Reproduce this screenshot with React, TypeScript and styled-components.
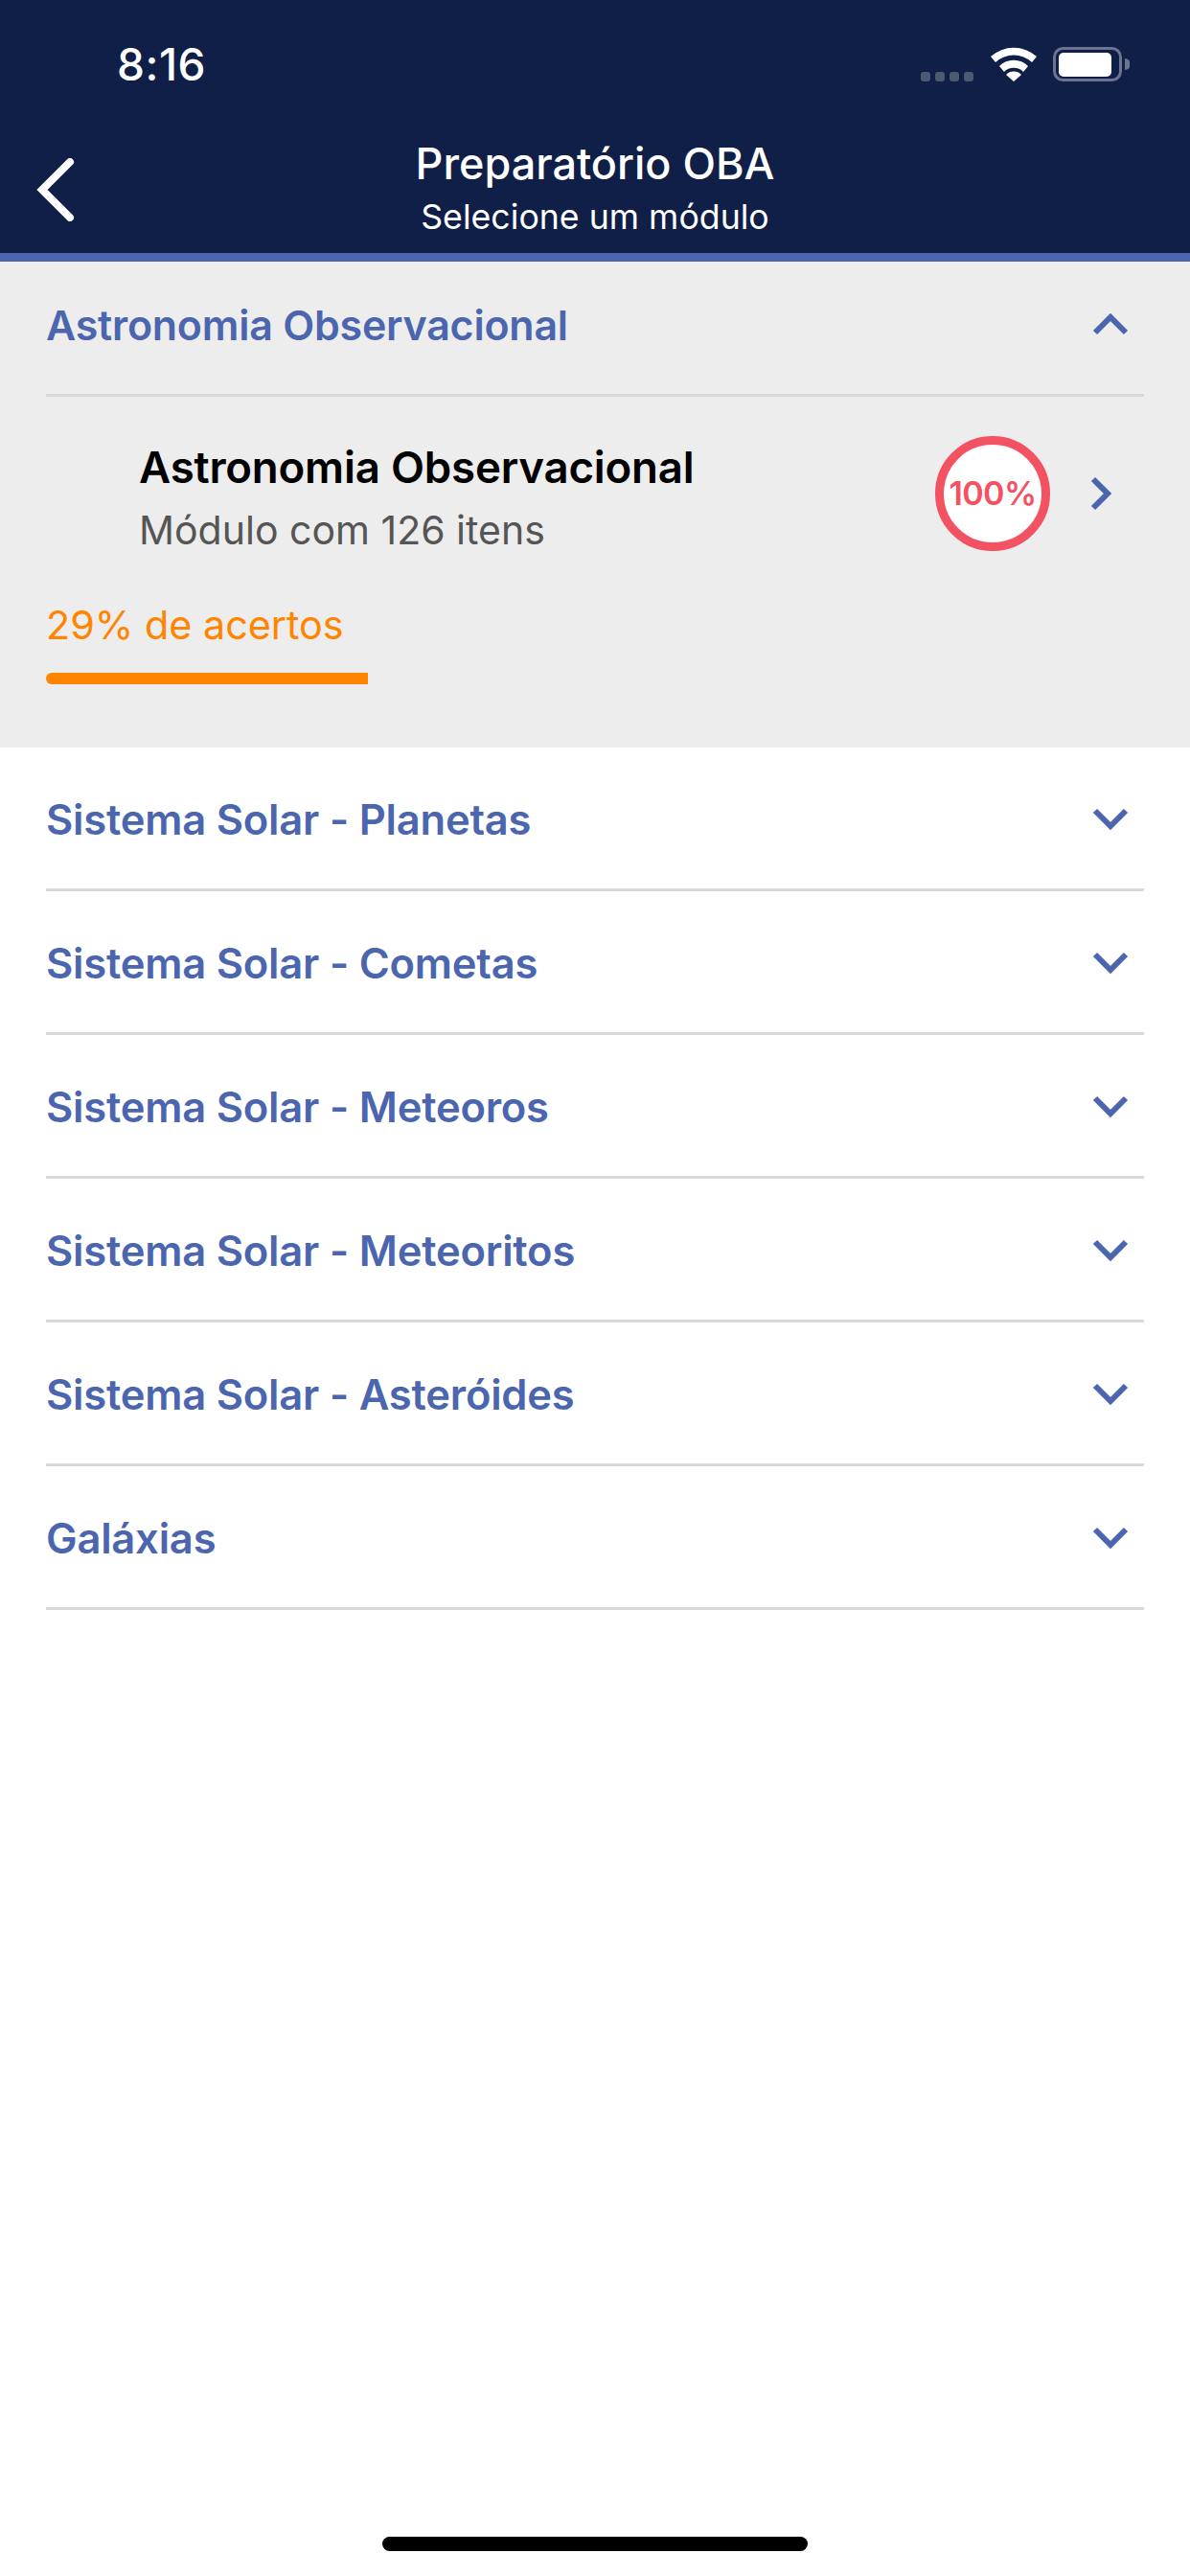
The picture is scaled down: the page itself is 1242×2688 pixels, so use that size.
import React from "react";
import styled, { createGlobalStyle } from "styled-components";

const Global = createGlobalStyle`
  html, body { margin: 0; padding: 0; background: #fff; }
  body { font-family: Inter, "Noto Sans", sans-serif; -webkit-font-smoothing: antialiased; }
`;
const Screen = styled.div`
  width: 1242px; height: 2688px; display: flex; flex-direction: column; background: #fff; overflow: hidden;
`;
const Header = styled.header`
  box-sizing: border-box; background: #101f48; border-bottom: 9px solid #4b66ae; flex: none;
  display: flex; flex-direction: column; height: 273px;
`;
const StatusBar = styled.div`
  height: 132px; flex: none; display: flex; align-items: flex-start; justify-content: space-between;
  padding: 42px 63px 0 122px; box-sizing: border-box;
`;
const Time = styled.span`
  color: #fff; font-size: 46px; line-height: 50px; font-weight: 500; letter-spacing: 0.5px;
`;
const StatusIcons = styled.div`
  display: flex; align-items: flex-start; margin-top: 7px;
`;
const Nav = styled.div`
  flex: 1; display: grid; grid-template-columns: 120px 1fr 120px; align-items: start;
`;
const BackBtn = styled.div`
  padding: 33px 0 0 38px;
  display: flex;
`;
const NavTitles = styled.div`
  display: flex; flex-direction: column; align-items: center; color: #fff;
`;
const NavTitle = styled.div`
  font-size: 45px; line-height: 50px; font-weight: 500; margin-top: 14px; white-space: nowrap;
`;
const NavSub = styled.div`
  font-size: 35.7px; line-height: 40px; font-weight: 400; margin-top: 10px; white-space: nowrap;
`;
const Section = styled.section<{ $open?: boolean }>`
  background: ${(p) => (p.$open ? "#ededed" : "#fff")};
  padding: 0 48px;
`;
const RowHead = styled.div<{ $open?: boolean }>`
  height: ${(p) => (p.$open ? "141px" : "150px")};
  box-sizing: border-box; border-bottom: 3px solid #d8d8d8;
  display: flex; align-items: center; justify-content: space-between;
  padding: ${(p) => (p.$open ? "0 0 6px 0" : "2px 0 0 0")};
`;
const RowTitle = styled.span<{ $open?: boolean }>`
  color: #4b66ae; font-size: ${(p) => (p.$open ? "42.9px" : "43.5px")}; font-weight: 600; line-height: 50px; letter-spacing: -0.2px;
`;
const Chevron = styled.svg<{ $lift?: boolean }>`
  width: 38px; height: 24px; margin-right: 16px; flex: none;
  margin-top: ${(p) => (p.$lift ? "-2px" : "0")};
`;
const Item = styled.div`
  display: flex; align-items: center; padding: 48px 31px 0 97px; height: 105px;
`;
const ItemText = styled.div`
  flex: 1; display: flex; flex-direction: column; margin-top: 9px;
`;
const ItemTitle = styled.div`
  color: #000; font-size: 45.6px; font-weight: 600; line-height: 50px; letter-spacing: -0.2px;
`;
const ItemSub = styled.div`
  color: #555; font-size: 41px; line-height: 46px; margin-top: 17px;
`;
const Ring = styled.div`
  width: 120px; height: 120px; box-sizing: border-box; border: 9px solid #f25261; border-radius: 50%;
  background: #fff; color: #f25261; font-size: 34px; font-weight: 600; display: flex; align-items: center; justify-content: center;
  margin-right: 41px; letter-spacing: -0.6px;
`;
const Score = styled.div`
  color: #ff8500; font-size: 41.3px; line-height: 46px; margin-top: 62px;
`;
const Bar = styled.div`
  height: 12px; width: 336px; background: #ff8500; border-radius: 6px 0 0 6px; margin: 27px 0 66px;
`;
const Spacer = styled.div`
  flex: 1;
`;
const HomeWrap = styled.div`
  display: flex; justify-content: center; padding-bottom: 26px;
`;
const HomeBar = styled.div`
  width: 444px; height: 15px; border-radius: 8px; background: #000;
`;
const Signal = styled.div`
  display: flex; gap: 5px; margin: 26px 17px 0 0;
`;
const Dot = styled.i`
  width: 10px; height: 10px; border-radius: 3px; background: #4d5873; display: block;
`;

const Down = () => (
  <Chevron $lift viewBox="0 0 38 24"><path d="M3 4 L19 20 L35 4" fill="none" stroke="#4b66ae" strokeWidth="6" /></Chevron>
);
const Up = () => (
  <Chevron viewBox="0 0 38 24"><path d="M3 20 L19 4 L35 20" fill="none" stroke="#4b66ae" strokeWidth="6" /></Chevron>
);

const rows = [
  "Sistema Solar - Planetas",
  "Sistema Solar - Cometas",
  "Sistema Solar - Meteoros",
  "Sistema Solar - Meteoritos",
  "Sistema Solar - Asteróides",
  "Galáxias",
];

export default function App() {
  return (
    <Screen>
      <Global />
      <Header>
        <StatusBar>
          <Time>8:16</Time>
          <StatusIcons>
            <Signal>{[0, 1, 2, 3].map((i) => <Dot key={i} />)}</Signal>
            <svg width="50" height="36" viewBox="0 0 50 36" style={{ marginRight: 16 }}>
              <path d="M1 10 A36 36 0 0 1 49 10 L44 16 A28 28 0 0 0 6 16 Z" fill="#fff" />
              <path d="M10 20 A21 21 0 0 1 40 20 L35 26 A14 14 0 0 0 15 26 Z" fill="#fff" />
              <path d="M17 29 A11 11 0 0 1 33 29 L25 36 Z" fill="#fff" />
            </svg>
            <svg width="80" height="36" viewBox="0 0 80 36">
              <rect x="1.5" y="1.5" width="69" height="33" rx="9" fill="none" stroke="#6c7590" strokeWidth="3" />
              <rect x="6" y="6" width="55" height="25" rx="5" fill="#fff" />
              <path d="M75 12 A6 6 0 0 1 75 24 Z" fill="#6c7590" />
            </svg>
          </StatusIcons>
        </StatusBar>
        <Nav>
          <BackBtn>
            <svg width="40" height="66" viewBox="0 0 40 66">
              <path d="M35 4 L6 33 L35 62" fill="none" stroke="#fff" strokeWidth="8" strokeLinecap="round" />
            </svg>
          </BackBtn>
          <NavTitles>
            <NavTitle>Preparatório OBA</NavTitle>
            <NavSub>Selecione um módulo</NavSub>
          </NavTitles>
        </Nav>
      </Header>
      <Section $open>
        <RowHead $open>
          <RowTitle $open>Astronomia Observacional</RowTitle>
          <Up />
        </RowHead>
        <Item>
          <ItemText>
            <ItemTitle>Astronomia Observacional</ItemTitle>
            <ItemSub>Módulo com 126 itens</ItemSub>
          </ItemText>
          <Ring>100%</Ring>
          <svg width="26" height="36" viewBox="0 0 26 36">
            <path d="M4 3 L19 18 L4 33" fill="none" stroke="#4b66ae" strokeWidth="6" />
          </svg>
        </Item>
        <Score>29% de acertos</Score>
        <Bar />
      </Section>
      {rows.map((r) => (
        <Section key={r}>
          <RowHead>
            <RowTitle>{r}</RowTitle>
            <Down />
          </RowHead>
        </Section>
      ))}
      <Spacer />
      <HomeWrap><HomeBar /></HomeWrap>
    </Screen>
  );
}
